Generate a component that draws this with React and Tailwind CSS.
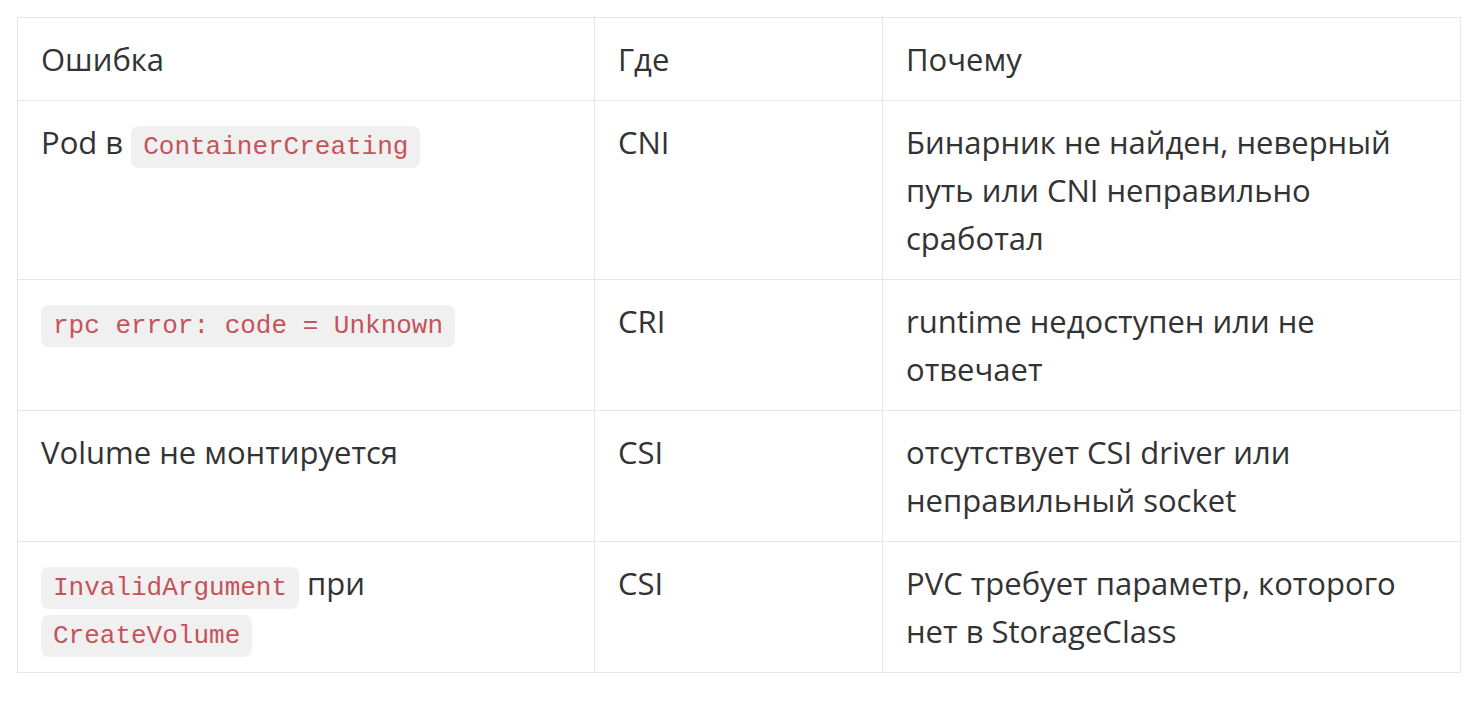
import React from 'react';

const rows = [
  {
    error: (
      <>
        Pod в <Code>ContainerCreating</Code>
      </>
    ),
    where: 'CNI',
    why: 'Бинарник не найден, неверный путь или CNI неправильно сработал',
  },
  {
    error: <Code>rpc error: code = Unknown</Code>,
    where: 'CRI',
    why: 'runtime недоступен или не отвечает',
  },
  {
    error: 'Volume не монтируется',
    where: 'CSI',
    why: 'отсутствует CSI driver или неправильный socket',
  },
  {
    error: (
      <>
        <Code>InvalidArgument</Code> при <Code>CreateVolume</Code>
      </>
    ),
    where: 'CSI',
    why: 'PVC требует параметр, которого нет в StorageClass',
  },
];

function Code({ children }) {
  return (
    <code className="rounded-lg bg-[#f0f0f0] px-[12px] py-[6px] font-['Liberation_Mono',monospace] text-[26px] leading-none text-[#c4545c]">
      {children}
    </code>
  );
}

const cell = 'border border-[#e6e6e6] px-[23px] py-[17px] align-top';

export default function App() {
  return (
    <div className="min-h-screen bg-white pl-[17px] pt-[17px] font-['Open_Sans',sans-serif] text-[31px] leading-[48px] text-[#333]">
      <table className="w-[1443px] table-fixed border-collapse text-left">
        <colgroup>
          <col className="w-[577px]" />
          <col className="w-[288px]" />
          <col className="w-[578px]" />
        </colgroup>
        <thead>
          <tr>
            <th className={`${cell} font-normal`}>Ошибка</th>
            <th className={`${cell} font-normal`}>Где</th>
            <th className={`${cell} font-normal`}>Почему</th>
          </tr>
        </thead>
        <tbody>
          {rows.map((r, i) => (
            <tr key={i}>
              <td className={cell}>{r.error}</td>
              <td className={cell}>{r.where}</td>
              <td className={cell}>{r.why}</td>
            </tr>
          ))}
        </tbody>
      </table>
    </div>
  );
}
